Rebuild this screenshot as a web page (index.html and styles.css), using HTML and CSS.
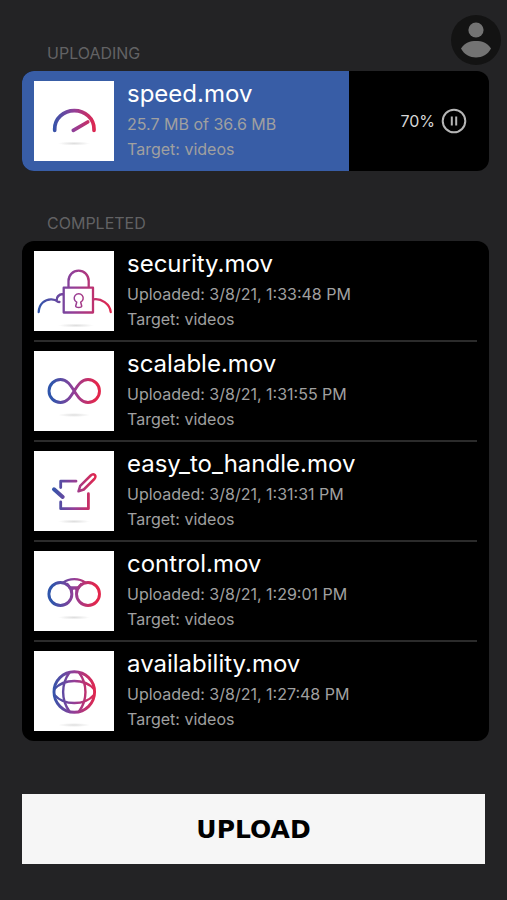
FILE: index.html
```html
<!DOCTYPE html>
<html lang="en">
<head>
<meta charset="utf-8">
<meta name="viewport" content="width=device-width, initial-scale=1">
<title>Uploads</title>
<link rel="stylesheet" href="styles.css">
</head>
<body>
<svg class="defs" aria-hidden="true">
  <defs>
    <linearGradient id="brand" gradientUnits="userSpaceOnUse" x1="18" y1="0" x2="62" y2="0">
      <stop offset="0" stop-color="#2f55ab"/>
      <stop offset="0.5" stop-color="#933f98"/>
      <stop offset="1" stop-color="#e2264c"/>
    </linearGradient>
    <linearGradient id="brand-wide" gradientUnits="userSpaceOnUse" x1="4" y1="0" x2="77" y2="0">
      <stop offset="0" stop-color="#2f55ab"/>
      <stop offset="0.48" stop-color="#933f98"/>
      <stop offset="1" stop-color="#e2264c"/>
    </linearGradient>
    <radialGradient id="shadow">
      <stop offset="0" stop-color="#dedede"/>
      <stop offset="1" stop-color="#ffffff"/>
    </radialGradient>
  </defs>
</svg>
<main class="screen">
  <header class="topbar">
    <h2 class="label">UPLOADING</h2>
    <button class="account" type="button" aria-label="Account">
      <svg viewBox="0 0 50 50"><circle cx="25" cy="15" r="7.6"/><path d="M10 33.5C14 27.500 19 26 25 26S36 27.500 40 33.500C37 39.500 31 42.500 25 42.500S13 39.500 10 33.500Z"/></svg>
    </button>
  </header>
  <section class="card card-active" aria-label="Uploading">
    <div class="progress" style="width:70%"></div>
    <article class="item">
      <svg class="thumb" viewBox="0 0 80 80"><ellipse cx="40" cy="62.500" rx="16" ry="2" fill="url(#shadow)"/><path d="M20.700 49.300V48C20.700 37.500 29.500 29.700 40.300 29.700S60 37.500 60 48V49.300M39.300 49.300L53.700 41" stroke-width="3.700"/></svg>
      <div class="info">
        <h3 class="name">speed.mov</h3>
        <p class="meta">25.7 MB of 36.6 MB</p>
        <p class="meta">Target: videos</p>
      </div>
      <span class="percent">70%</span>
      <button class="pause" type="button" aria-label="Pause upload">
        <svg viewBox="0 0 26 26"><circle cx="13" cy="13" r="11.300"/><path d="M10.800 8.500V17.500M15.200 8.500V17.500"/></svg>
      </button>
    </article>
  </section>

  <h2 class="label label-completed">COMPLETED</h2>
  <section class="card" aria-label="Completed">
    <article class="item">
      <svg class="thumb wide" viewBox="0 0 80 80"><ellipse cx="42" cy="74.500" rx="18" ry="2" fill="url(#shadow)"/><path d="M29.700 36.700H59V61.500H29.700ZM34.500 36.700V30C34.500 24 39 19.700 44.600 19.700S54.700 24 54.700 30V36.700M4.700 61C5 53 11 48 17.500 48.300C20 48.400 22 49 23.500 50.500M29 43C25 43.500 22.500 46 22.700 49.500C22.800 50.500 24 51 25.500 51M59.500 48.300C67 47 76 53 76.700 61" stroke-width="2.300"/><path d="M42.700 51.200A4.500 4.500 0 1 1 46.700 51.200L47.700 55C48 57 41.400 57 41.700 55Z" stroke-width="1.500"/></svg>
      <div class="info">
        <h3 class="name">security.mov</h3>
        <p class="meta">Uploaded: 3/8/21, 1:33:48 PM</p>
        <p class="meta">Target: videos</p>
      </div>
    </article>
    <article class="item">
      <svg class="thumb" viewBox="0 0 80 80"><ellipse cx="40" cy="64" rx="16" ry="2" fill="url(#shadow)"/><path d="M40.200 40C36.500 34 33 28.500 26.500 28.500A11.500 11.500 0 0 0 26.500 51.500C33 51.500 36.500 46 40.200 40S47.500 28.500 54 28.500A11.500 11.500 0 0 1 54 51.500C47.500 51.500 44 46 40.200 40Z" stroke-width="2.900"/></svg>
      <div class="info">
        <h3 class="name">scalable.mov</h3>
        <p class="meta">Uploaded: 3/8/21, 1:31:55 PM</p>
        <p class="meta">Target: videos</p>
      </div>
    </article>
    <article class="item">
      <svg class="thumb" viewBox="0 0 80 80"><ellipse cx="40" cy="70.500" rx="16" ry="2" fill="url(#shadow)"/><path d="M26.700 36.500V30.200H42M26.700 51V57.700H54.400V42.700" stroke-width="2.800"/><path d="M20 38.300L28.700 46" stroke-width="4"/><path d="M44.500 40.300L46.200 34.800L56.700 24.500C59.800 21.500 63.300 25 60.300 28L49.800 38.500Z" stroke-width="2.500"/></svg>
      <div class="info">
        <h3 class="name">easy_to_handle.mov</h3>
        <p class="meta">Uploaded: 3/8/21, 1:31:31 PM</p>
        <p class="meta">Target: videos</p>
      </div>
    </article>
    <article class="item">
      <svg class="thumb" viewBox="0 0 80 80"><ellipse cx="40" cy="66.500" rx="16" ry="2" fill="url(#shadow)"/><g stroke-width="2.900"><circle cx="26.400" cy="43" r="11.500"/><circle cx="54" cy="43" r="11.500"/></g><path d="M29.500 31.500C35 27 45.500 27 51 31.500M33.500 33L35.500 36.500H45L47 33M37.800 43V39.500C37.800 36.500 42.700 36.500 42.700 39.500V43" stroke-width="2.300"/></svg>
      <div class="info">
        <h3 class="name">control.mov</h3>
        <p class="meta">Uploaded: 3/8/21, 1:29:01 PM</p>
        <p class="meta">Target: videos</p>
      </div>
    </article>
    <article class="item">
      <svg class="thumb" viewBox="0 0 80 80"><ellipse cx="40" cy="74" rx="16" ry="2" fill="url(#shadow)"/><circle cx="40.300" cy="41" r="20.300" stroke-width="2.900"/><path d="M35.500 21.500C27 33 27 49 35.500 60.500M45 21.500C53.600 33 53.600 49 45 60.500M20.500 38C30 27.300 50.500 27.300 60 38M20.500 44C30 54.700 50.500 54.700 60 44" stroke-width="2.400"/></svg>
      <div class="info">
        <h3 class="name">availability.mov</h3>
        <p class="meta">Uploaded: 3/8/21, 1:27:48 PM</p>
        <p class="meta">Target: videos</p>
      </div>
    </article>
  </section>
  <button class="upload" type="button">UPLOAD</button>
</main>
</body>
</html>
```
FILE: styles.css
```css
* {
  box-sizing: border-box;
}

body {
  margin: 0;
  background: #232325;
  color: #fff;
  font-family: Inter, "Liberation Sans", sans-serif;
}

h2, h3, p {
  margin: 0;
  font-weight: 400;
}

button {
  border: 0;
  padding: 0;
  cursor: pointer;
}

.defs {
  position: absolute;
  width: 0;
  height: 0;
}

.screen {
  min-height: 100vh;
  padding: 15px 18px 37px 22px;
}

.topbar {
  display: flex;
  justify-content: space-between;
  align-items: flex-end;
  margin-right: -12px;
  margin-bottom: 6px;
}

.label {
  padding-left: 25px;
  color: #626264;
  font-size: 16px;
  line-height: 24px;
}

.label-completed {
  margin-top: 40px;
  margin-bottom: 6px;
}

.account {
  width: 50px;
  height: 50px;
  border-radius: 50%;
  background: #131313;
}

.account svg {
  display: block;
  fill: #737373;
}

.card {
  overflow: hidden;
  border-radius: 12px;
  background: #000;
}

.card-active {
  position: relative;
}

.progress {
  position: absolute;
  inset: 0 auto 0 0;
  background: #385da6;
}

.item {
  position: relative;
  display: flex;
  align-items: center;
  height: 100px;
  padding: 0 22px 0 12px;
}

.item + .item::before {
  content: "";
  position: absolute;
  top: -1px;
  left: 12px;
  right: 12px;
  height: 2px;
  background: #2b2b2b;
}

.thumb {
  flex: none;
  width: 80px;
  height: 80px;
  margin-right: 13px;
  background: #fff;
  fill: none;
  stroke-linecap: round;
  stroke-linejoin: round;
}

.thumb path,
.thumb circle {
  stroke: url(#brand);
}

.thumb.wide path {
  stroke: url(#brand-wide);
}

.info {
  flex: 1;
  min-width: 0;
  padding-bottom: 1px;
}

.name {
  margin-bottom: 3px;
  font-size: 24px;
  line-height: 30px;
}

.meta {
  color: #a0a0a0;
  font-size: 16px;
  line-height: 25px;
}

.percent {
  margin-right: 6px;
  color: #d6d6d6;
  font-size: 16px;
}

.pause {
  width: 26px;
  height: 26px;
  background: none;
}

.pause svg {
  display: block;
  fill: none;
  stroke: #b5b5b5;
  stroke-width: 2;
}

.upload {
  display: block;
  width: calc(100% - 4px);
  height: 70px;
  margin-top: 53px;
  background: #f6f6f6;
  color: #000;
  font: bold 25px "DejaVu Sans", sans-serif;
}
```
